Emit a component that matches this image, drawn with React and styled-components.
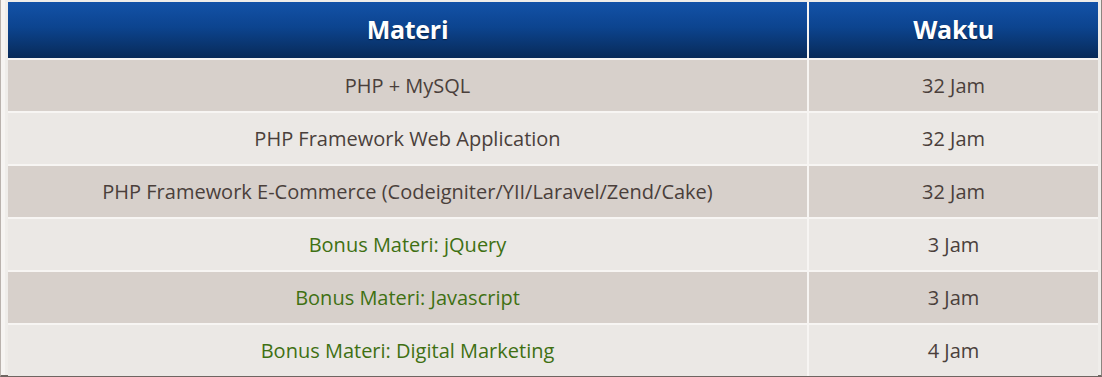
import React from "react";
import styled, { createGlobalStyle } from "styled-components";

const Global = createGlobalStyle`
  html, body { margin: 0; padding: 0; background: #efedea; }
  body { font-family: "Open Sans", "Noto Sans", sans-serif; }
`;

const Frame = styled.div`
  box-sizing: border-box;
  width: 1102px;
  height: 377px;
  padding: 2px 3px 0 7px;
  background: #efedea;
  border-left: 1px solid #b9b2ad;
  border-right: 1px solid #8c8480;
  border-bottom: 2px solid #6e6561;
  box-shadow: inset 4px 0 0 #f6f4f2;
`;

const Grid = styled.div`
  display: grid;
  grid-template-columns: 799px 1fr;
  grid-template-rows: 56px repeat(6, 51px);
  gap: 2px;
  background: #f7f5f3;
`;

const Head = styled.div`
  display: flex;
  align-items: center;
  justify-content: center;
  background: linear-gradient(to bottom, #1352a8 0%, #0c448f 45%, #082a58 100%);
  color: #ffffff;
  font-weight: 700;
  font-size: 25px;
  letter-spacing: -0.3px;
  text-shadow: 0 1px 1px rgba(0, 0, 0, 0.5);
  padding-bottom: 2px;
`;

const Cell = styled.div`
  display: flex;
  align-items: center;
  justify-content: center;
  background: ${(p) => (p.$odd ? "#d7d0cb" : "#ebe8e5")};
  color: ${(p) => (p.$bonus ? "#3f7013" : "#4a3f3b")};
  font-size: 20px;
`;

const rows = [
  ["PHP + MySQL", "32 Jam", false],
  ["PHP Framework Web Application", "32 Jam", false],
  ["PHP Framework E-Commerce (Codeigniter/YII/Laravel/Zend/Cake)", "32 Jam", false],
  ["Bonus Materi: jQuery", "3 Jam", true],
  ["Bonus Materi: Javascript", "3 Jam", true],
  ["Bonus Materi: Digital Marketing", "4 Jam", true],
];

export default function App() {
  return (
    <>
      <Global />
      <Frame>
        <Grid>
          <Head>Materi</Head>
          <Head>Waktu</Head>
          {rows.map(([m, w, bonus], i) => (
            <React.Fragment key={i}>
              <Cell $odd={i % 2 === 0} $bonus={bonus}>{m}</Cell>
              <Cell $odd={i % 2 === 0}>{w}</Cell>
            </React.Fragment>
          ))}
        </Grid>
      </Frame>
    </>
  );
}
